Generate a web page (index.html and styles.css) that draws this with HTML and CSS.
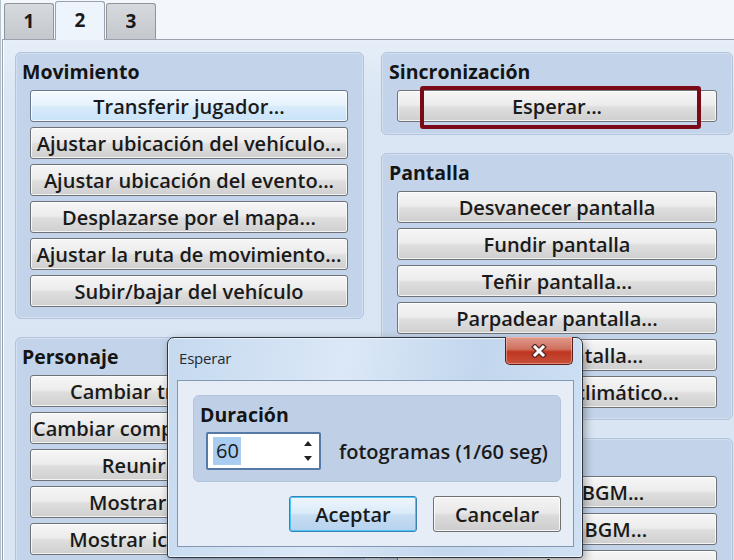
FILE: index.html
```html
<!DOCTYPE html>
<html lang="es">
<head>
<meta charset="utf-8">
<title>Comandos de evento</title>
<link rel="stylesheet" href="styles.css">
</head>
<body>
<div class="window">
  <div class="tabs">
    <div class="tab">1</div>
    <div class="tab active">2</div>
    <div class="tab">3</div>
  </div>
  <div class="panel">
    <div class="col col-left">
      <section class="group">
        <h2 class="group-title">Movimiento</h2>
        <div class="btns">
          <button class="btn hot">Transferir jugador...</button>
          <button class="btn">Ajustar ubicación del vehículo...</button>
          <button class="btn">Ajustar ubicación del evento...</button>
          <button class="btn">Desplazarse por el mapa...</button>
          <button class="btn">Ajustar la ruta de movimiento...</button>
          <button class="btn">Subir/bajar del vehículo</button>
        </div>
      </section>
      <section class="group">
        <h2 class="group-title">Personaje</h2>
        <div class="btns">
          <button class="btn">Cambiar transparencia...</button>
          <button class="btn">Cambiar compañeros de grupo...</button>
          <button class="btn">Reunir seguidores</button>
          <button class="btn">Mostrar animación...</button>
          <button class="btn">Mostrar icono de globo...</button>
        </div>
      </section>
    </div>
    <div class="col col-right">
      <section class="group group-sync">
        <h2 class="group-title">Sincronización</h2>
        <div class="btns">
          <button class="btn">Esperar...</button>
        </div>
        <div class="highlight"></div>
      </section>
      <section class="group">
        <h2 class="group-title">Pantalla</h2>
        <div class="btns">
          <button class="btn">Desvanecer pantalla</button>
          <button class="btn">Fundir pantalla</button>
          <button class="btn">Teñir pantalla...</button>
          <button class="btn">Parpadear pantalla...</button>
          <button class="btn">Sacudir pantalla...</button>
          <button class="btn">Ajustar efecto climático...</button>
        </div>
      </section>
      <section class="group group-audio">
        <h2 class="group-title">Audio y vídeo</h2>
        <div class="btns">
          <button class="btn">Reproducir BGM...</button>
          <button class="btn">Desvanecer BGM...</button>
          <button class="btn">Guardar BGM</button>
        </div>
      </section>
    </div>
  </div>

  <div class="dialog">
    <div class="dialog-title">Esperar</div>
    <button class="close" aria-label="Cerrar">
      <svg width="18" height="14" viewBox="0 0 18 14">
        <path d="M5 3 L13 11 M13 3 L5 11" stroke="#5b2a24" stroke-width="5.5" stroke-linecap="square" fill="none"/>
        <path d="M5 3 L13 11 M13 3 L5 11" stroke="#ffffff" stroke-width="3" stroke-linecap="square" fill="none"/>
      </svg>
    </button>
    <div class="client">
      <div class="dgroup">
        <div class="dgroup-title">Duración</div>
        <div class="drow">
          <div class="spin">
            <span class="spin-value">60</span>
            <svg class="spin-arrows" width="10" height="26" viewBox="0 0 10 26">
              <path d="M5 3 L9 8 L1 8 Z" fill="#222"/>
              <path d="M1 18 L9 18 L5 23 Z" fill="#222"/>
            </svg>
          </div>
          <span class="unit">fotogramas (1/60 seg)</span>
        </div>
      </div>
      <div class="dbuttons">
        <button class="dbtn default">Aceptar</button>
        <button class="dbtn">Cancelar</button>
      </div>
    </div>
  </div>
</div>
</body>
</html>
```

FILE: styles.css
```css
* { box-sizing: border-box; }

html, body {
  margin: 0;
  padding: 0;
  width: 734px;
  height: 560px;
  overflow: hidden;
}

body {
  background: #f3f7fc;
  font-family: "Open Sans", "Noto Sans", sans-serif;
  color: #1b1b1b;
}

.window {
  position: relative;
  width: 734px;
  height: 560px;
  overflow: hidden;
  padding-left: 2px;
  border-left: 1px solid #b7c2cf;
}

/* Tabs */
.tabs {
  display: flex;
  height: 39px;
  padding-top: 3px;
  padding-left: 1px;
  align-items: flex-end;
}

.tab {
  width: 50px;
  height: 36px;
  margin-right: 1px;
  border: 1px solid #8f959c;
  border-bottom: none;
  border-radius: 3px 3px 0 0;
  background: linear-gradient(#d6dade, #c4c8cd);
  font-weight: 700;
  font-size: 19px;
  line-height: 34px;
  text-align: center;
  color: #1a1a1a;
}

.tab.active {
  height: 39px;
  margin-bottom: -1px;
  position: relative;
  z-index: 1;
  background: #eef4fb;
  line-height: 37px;
  border-color: #9aa3ad;
}

/* Panel */
.panel {
  display: flex;
  gap: 17px;
  height: 521px;
  border-top: 1px solid #9aa3ad;
  border-left: 1px solid #9aa3ad;
  margin-left: -1px;
  padding: 12px 0 0 12px;
  background: linear-gradient(#e6eef8, #dae6f4 60px, #d9e5f3);
  box-shadow: inset 1px 0 0 #ffffff;
}

.col {
  display: flex;
  flex-direction: column;
  gap: 18px;
  flex: none;
}

.col-left { width: 349px; }
.col-right { width: 352px; }

.group {
  position: relative;
  background: #c3d4ea;
  border: 1px solid #b1c4dc;
  border-radius: 6px;
  box-shadow: inset 0 0 0 1px #d2e0f1;
  padding: 5px 15px 11px 14px;
}

.col-right .group {
  padding-left: 15px;
  padding-right: 15px;
}

.group-title {
  margin: 0 0 4px -8px;
  height: 28px;
  font-size: 19.5px;
  font-weight: 700;
  line-height: 28px;
  color: #141414;
  white-space: nowrap;
}

.btns {
  display: flex;
  flex-direction: column;
  gap: 5px;
}

.btn {
  display: block;
  width: 100%;
  height: 32px;
  margin: 0;
  padding: 0 2px;
  border: 1px solid #6f7378;
  border-radius: 3px;
  background: linear-gradient(#f6f6f6, #ececec 46%, #dedede 54%, #cfcfcf);
  box-shadow: inset 0 0 0 1px rgba(255,255,255,0.75);
  font-family: "Open Sans", "Noto Sans", sans-serif;
  font-size: 20px;
  font-weight: 600;
  line-height: 29px;
  color: #1a1a1a;
  text-align: center;
  white-space: nowrap;
  overflow: hidden;
}

.btn.hot {
  border-color: #66788c;
  background: linear-gradient(#f5fafe, #e6f2fc 46%, #d6eafa 54%, #c9e3f8);
}

.group-sync .btns { padding-bottom: 1px; }

.highlight {
  position: absolute;
  left: 38px;
  top: 33px;
  width: 281px;
  height: 43px;
  border: 4px solid #7a0b16;
  border-radius: 3px;
}

/* Dialog */
.dialog {
  position: absolute;
  left: 166px;
  top: 337px;
  width: 416px;
  height: 221px;
  padding: 42px 8px 10px 9px;
  border: 1px solid #2e3440;
  border-radius: 7px 7px 3px 3px;
  background: linear-gradient(100deg, #c5d9ef 0%, #dbe8f7 40%, #c2d6ed 70%, #d0e1f3 100%);
  box-shadow: inset 0 0 0 1px #eaf2fb, 2px 3px 10px rgba(0,0,0,0.35);
  z-index: 10;
}

.dialog-title {
  position: absolute;
  left: 11px;
  top: 10px;
  font-size: 15px;
  font-weight: 400;
  color: #1f2a33;
  line-height: 20px;
  letter-spacing: -0.2px;
}

.close {
  position: absolute;
  right: 9px;
  top: -1px;
  width: 68px;
  height: 28px;
  margin: 0;
  padding: 0;
  border: 1px solid #5a1d17;
  border-top: none;
  border-radius: 0 0 5px 5px;
  background: linear-gradient(#e09a8c, #d0705e 45%, #bf3520 55%, #c8503a);
  box-shadow: inset 0 0 0 1px rgba(255,210,200,0.45);
  display: flex;
  align-items: center;
  justify-content: center;
}

.client {
  height: 167px;
  border: 1px solid #8397b2;
  background: #e6edf6;
  padding: 14px 12px 0 15px;
}

.dgroup {
  height: 87px;
  background: #bfd0e6;
  border: 1px solid #b2c5dd;
  border-radius: 6px;
  padding: 6px 12px 0 12px;
}

.dgroup-title {
  margin-left: -6px;
  height: 26px;
  font-size: 19.5px;
  font-weight: 700;
  line-height: 26px;
  color: #141414;
}

.drow {
  display: flex;
  align-items: center;
  gap: 18px;
  margin-top: 4px;
}

.spin {
  display: flex;
  align-items: center;
  width: 115px;
  height: 38px;
  border: 2px solid #567aa8;
  border-radius: 2px;
  background: #ffffff;
  padding: 0 6px 0 5px;
}

.spin-value {
  background: #a9cdf0;
  font-size: 20px;
  font-weight: 400;
  line-height: 28px;
  padding: 0 2px 0 3px;
  color: #1a1a1a;
}

.spin-arrows { margin-left: auto; }

.unit {
  font-size: 20px;
  font-weight: 600;
  color: #1a1a1a;
  white-space: nowrap;
}

.dbuttons {
  display: flex;
  justify-content: flex-end;
  gap: 16px;
  margin-top: 14px;
}

.dbtn {
  width: 128px;
  height: 36px;
  margin: 0;
  padding: 0;
  border: 1px solid #707070;
  border-radius: 3px;
  background: linear-gradient(#f4f4f4, #e9e9e9 46%, #dbdbdb 54%, #cdcdcd);
  box-shadow: inset 0 0 0 1px rgba(255,255,255,0.8);
  font-family: "Open Sans", "Noto Sans", sans-serif;
  font-size: 20px;
  font-weight: 600;
  color: #1a1a1a;
}

.dbtn.default {
  border-color: #3c7fb1;
  background: linear-gradient(#eef6fd, #dcebf9 46%, #c6ddf3 54%, #b6d2ee);
  box-shadow: inset 0 0 0 1px #48c8f6;
}
```
